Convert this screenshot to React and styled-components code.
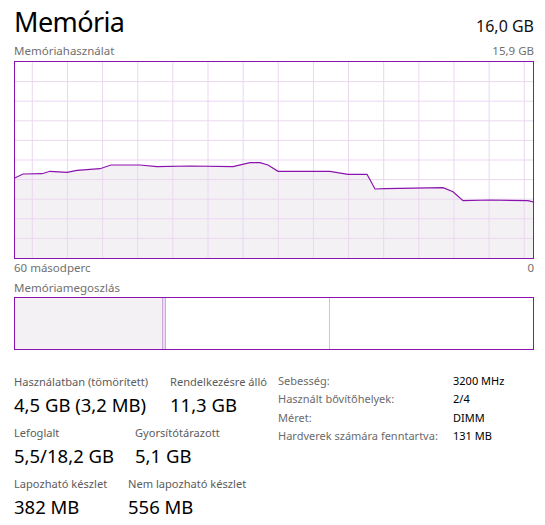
import React from 'react';
import styled, { createGlobalStyle } from 'styled-components';

const GlobalStyle = createGlobalStyle`
  html, body {
    margin: 0;
    padding: 0;
    background: #fff;
  }
  body {
    font-family: "Segoe UI", "Noto Sans", "Open Sans", sans-serif;
  }
`;

const PURPLE = '#8b12ae';

const Page = styled.div`
  width: 545px;
  height: 525px;
  box-sizing: border-box;
  padding: 4px 11px 0 14px;
  overflow: hidden;
`;

const Header = styled.div`
  display: flex;
  justify-content: space-between;
  align-items: baseline;
  height: 36px;
  margin-bottom: 3px;
`;

const Title = styled.h1`
  margin: 0;
  font-size: 27px;
  font-weight: 400;
  letter-spacing: -0.6px;
  line-height: 36px;
  color: #000;
`;

const Capacity = styled.span`
  font-size: 16px;
  color: #111;
`;

const Caption = styled.div`
  display: flex;
  justify-content: space-between;
  font-size: 11.5px;
  line-height: 16px;
  color: #707070;
  margin-top: ${({ top }) => top || 0}px;
  margin-bottom: ${({ bottom }) => bottom || 0}px;
`;

const GraphBox = styled.div`
  height: 198px;
  box-sizing: border-box;
  border: 1px solid ${PURPLE};
  background: #fff;
  svg {
    display: block;
    width: 100%;
    height: 100%;
  }
`;

const Bar = styled.div`
  display: flex;
  height: 53px;
  box-sizing: border-box;
  border: 1px solid ${PURPLE};
`;

const Segment = styled.div`
  flex: ${({ grow }) => (grow ? '1 1 auto' : '0 0 auto')};
  width: ${({ w }) => (w ? `${w}px` : 'auto')};
  background: ${({ fill }) => fill || '#fff'};
  border-right: ${({ line }) => (line ? `1px solid ${line}` : 'none')};
`;

const Stats = styled.div`
  display: flex;
  align-items: flex-start;
  margin-top: 22px;
`;

const LeftCol = styled.div`
  width: 264px;
  padding-top: 2px;
  display: flex;
  flex-direction: column;
  gap: 8px;
`;

const StatRow = styled.div`
  display: flex;
`;

const StatItem = styled.div`
  flex: 0 0 auto;
  width: ${({ w }) => (w ? `${w}px` : 'auto')};
  display: flex;
  flex-direction: column;
  gap: 3px;
  white-space: nowrap;
`;

const StatLabel = styled.div`
  font-size: 11.1px;
  line-height: 16px;
  color: #5c5c5c;
`;

const StatValue = styled.div`
  font-size: 18.5px;
  line-height: 24px;
  color: #000;
`;

const Details = styled.div`
  display: grid;
  grid-template-columns: 175px auto;
  font-size: 11px;
  line-height: 18.3px;
  white-space: nowrap;
`;

const DetailLabel = styled.div`
  color: #6b6b6b;
`;

const DetailValue = styled.div`
  color: #000;
`;

const points = [
  [14, 178.3], [23, 174], [42, 173.7], [50, 171.3], [67, 172.3], [77, 170.3],
  [100, 168.7], [111, 165], [140, 165], [157, 166.7], [190, 166], [233, 166.7],
  [250, 162.7], [260, 162.7], [268, 165], [278, 171.3], [330, 171.3],
  [348, 174.3], [367, 174.3], [375, 189], [385, 188.7], [443, 187.7],
  [453, 191.7], [463, 200.7], [490, 200], [528, 200.7], [534, 202],
];

function UsageGraph() {
  const line = points.map(([x, y], i) => `${i ? 'L' : 'M'}${x} ${y}`).join(' ');
  const area = `${line} L534 258 L14 258 Z`;
  const vLines = Array.from({ length: 15 }, (_, k) => 32.3 + 35.14 * k);
  const hLines = Array.from({ length: 9 }, (_, k) => 62 + 19.6 * (k + 1));
  return (
    <GraphBox>
      <svg viewBox="15 62 518 196" preserveAspectRatio="none">
        <path d={area} fill="#f4f1f5" />
        {vLines.map((x) => (
          <line key={`v${x}`} x1={x} x2={x} y1="62" y2="258" stroke="#ead7f0" strokeWidth="1" />
        ))}
        {hLines.map((y) => (
          <line key={`h${y}`} x1="15" x2="533" y1={y} y2={y} stroke="#ead7f0" strokeWidth="1" />
        ))}
        <path d={line} fill="none" stroke={PURPLE} strokeWidth="1.2" />
      </svg>
    </GraphBox>
  );
}

const details = [
  ['Sebesség:', '3200 MHz'],
  ['Használt bővítőhelyek:', '2/4'],
  ['Méret:', 'DIMM'],
  ['Hardverek számára fenntartva:', '131 MB'],
];

export default function App() {
  return (
    <Page>
      <GlobalStyle />
      <Header>
        <Title>Memória</Title>
        <Capacity>16,0 GB</Capacity>
      </Header>
      <Caption bottom={2}>
        <span>Memóriahasználat</span>
        <span>15,9 GB</span>
      </Caption>
      <UsageGraph />
      <Caption top={1}>
        <span>60 másodperc</span>
        <span>0</span>
      </Caption>
      <Caption top={4} bottom={1}>
        <span>Memóriamegoszlás</span>
      </Caption>
      <Bar>
        <Segment w={147} fill="#f4f1f5" line="#cfa6de" />
        <Segment w={2} fill="#ecdcf2" line="#cfa6de" />
        <Segment w={163} line="#d8bde3" />
        <Segment grow />
      </Bar>
      <Stats>
        <LeftCol>
          <StatRow>
            <StatItem w={156}>
              <StatLabel>Használatban (tömörített)</StatLabel>
              <StatValue>4,5 GB (3,2 MB)</StatValue>
            </StatItem>
            <StatItem>
              <StatLabel>Rendelkezésre álló</StatLabel>
              <StatValue>11,3 GB</StatValue>
            </StatItem>
          </StatRow>
          <StatRow>
            <StatItem w={121}>
              <StatLabel>Lefoglalt</StatLabel>
              <StatValue>5,5/18,2 GB</StatValue>
            </StatItem>
            <StatItem>
              <StatLabel>Gyorsítótárazott</StatLabel>
              <StatValue>5,1 GB</StatValue>
            </StatItem>
          </StatRow>
          <StatRow>
            <StatItem w={114}>
              <StatLabel>Lapozható készlet</StatLabel>
              <StatValue>382 MB</StatValue>
            </StatItem>
            <StatItem>
              <StatLabel>Nem lapozható készlet</StatLabel>
              <StatValue>556 MB</StatValue>
            </StatItem>
          </StatRow>
        </LeftCol>
        <Details>
          {details.map(([label, value]) => (
            <React.Fragment key={label}>
              <DetailLabel>{label}</DetailLabel>
              <DetailValue>{value}</DetailValue>
            </React.Fragment>
          ))}
        </Details>
      </Stats>
    </Page>
  );
}
